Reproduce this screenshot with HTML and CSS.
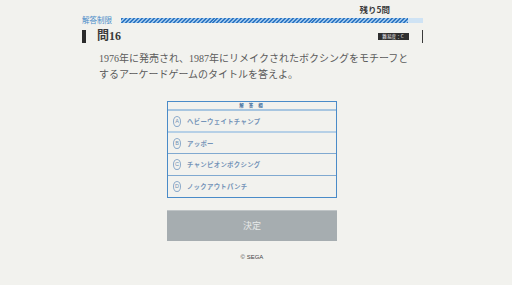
FILE: index.html
```html
<!DOCTYPE html>
<html lang="ja">
<head>
<meta charset="utf-8">
<link rel="stylesheet" href="styles.css">
</head>
<body>
<main class="quiz">
  <div class="remain">残り5問</div>
  <div class="limit">
    <span class="limit-label">解答制限</span>
    <div class="limit-bar"><div class="limit-fill" style="width:95%"></div></div>
  </div>
  <div class="qhead">
    <span class="qmark"></span>
    <span class="qnum">問16</span>
    <span class="badge">難易度：C</span>
    <span class="qline"></span>
  </div>
  <p class="question">1976年に発売され、1987年にリメイクされたボクシングをモチーフと<br>するアーケードゲームのタイトルを答えよ。</p>
  <div class="answers">
    <div class="answers-head">解 答 欄</div>
    <div class="opt opt-a"><span class="letter">A</span><span class="opt-text">ヘビーウェイトチャンプ</span></div>
    <div class="opt opt-b"><span class="letter">B</span><span class="opt-text">アッポー</span></div>
    <div class="opt opt-c"><span class="letter">C</span><span class="opt-text">チャンピオンボクシング</span></div>
    <div class="opt opt-d"><span class="letter">D</span><span class="opt-text">ノックアウトパンチ</span></div>
  </div>
  <div class="submit">決定</div>
  <div class="copy">© SEGA</div>
</main>
</body>
</html>
```
FILE: styles.css
```css
html, body {
  margin: 0;
  padding: 0;
}
body {
  background: #f2f2ee;
  width: 512px;
  height: 285px;
  overflow: hidden;
  font-family: "Noto Sans CJK JP", "Noto Sans", sans-serif;
}
.quiz {
  width: 341px;
  margin-left: 82px;
  padding-top: 4px;
}
.remain {
  text-align: right;
  padding-right: 33px;
  font-size: 8.5px;
  line-height: 10px;
  font-weight: 700;
  color: #3c3c3c;
  height: 10px;
}
.limit {
  display: flex;
  align-items: center;
  gap: 8px;
  margin-top: 2px;
  height: 8px;
}
.limit-label {
  font-size: 7.5px;
  line-height: 8px;
  color: #4a8bc8;
  width: 31px;
  white-space: nowrap;
}
.limit-bar {
  flex: 1;
  height: 5px;
  background: #cfe3f4;
}
.limit-fill {
  height: 100%;
  background: repeating-linear-gradient(-45deg, #2f78c4 0 1.4px, #9cc4ea 1.4px 2.8px);
}
.qhead {
  display: flex;
  align-items: center;
  height: 13px;
  margin-top: 6px;
}
.qmark {
  width: 4px;
  height: 13px;
  background: #2b2b2b;
}
.qnum {
  margin-left: 11px;
  font-family: "Liberation Serif", "Noto Sans CJK JP", serif;
  font-weight: 700;
  font-size: 12px;
  line-height: 13px;
  color: #3a3a3a;
}
.badge {
  margin-left: auto;
  width: 31px;
  height: 7px;
  background: #2f2f2f;
  color: #f0f0f0;
  font-size: 4.6px;
  line-height: 7px;
  text-align: center;
  white-space: nowrap;
}
.qline {
  width: 1.5px;
  height: 13px;
  background: #3a3a3a;
  margin-left: 13px;
}
.question {
  margin: 8px 0 0 17px;
  font-family: "Liberation Serif", "Noto Sans CJK JP", serif;
  font-size: 10px;
  line-height: 16px;
  color: #5a5a5a;
  white-space: nowrap;
}
.answers {
  margin: 18px 0 0 85px;
  width: 168px;
  border: 1px solid #4a8bc8;
}
.answers-head {
  height: 7px;
  font-size: 4.5px;
  line-height: 7px;
  font-weight: 700;
  text-align: center;
  color: #3f6f9f;
  letter-spacing: 2px;
  border-bottom: 2px solid #a8c6e0;
}
.opt {
  display: flex;
  align-items: center;
  padding-left: 5px;
  gap: 6px;
}
.opt-a { height: 20px; border-bottom: 2px solid #b6d0e6; }
.opt-b { height: 20px; border-bottom: 1px solid #80a9d0; }
.opt-c { height: 21px; border-bottom: 1px solid #80a9d0; }
.opt-d { height: 21px; }
.letter {
  width: 6px;
  height: 9px;
  border: 1px solid #89a8c9;
  border-radius: 50%;
  font-family: "Liberation Sans", sans-serif;
  font-size: 5.5px;
  line-height: 9px;
  text-align: center;
  color: #6f8fb3;
}
.opt-text {
  font-size: 6.4px;
  font-weight: 700;
  letter-spacing: 0.3px;
  color: #7594b8;
  white-space: nowrap;
}
.submit {
  margin: 12px 0 0 85px;
  width: 170px;
  height: 30px;
  background: #a6adb0;
  border-top: 1px solid #bfc4c6;
  color: #e8eaea;
  font-size: 9px;
  line-height: 30px;
  text-align: center;
}
.copy {
  margin: 12px 0 0 85px;
  width: 170px;
  text-align: center;
  font-family: "Liberation Sans", sans-serif;
  font-size: 6px;
  line-height: 8px;
  color: #444;
}
```
